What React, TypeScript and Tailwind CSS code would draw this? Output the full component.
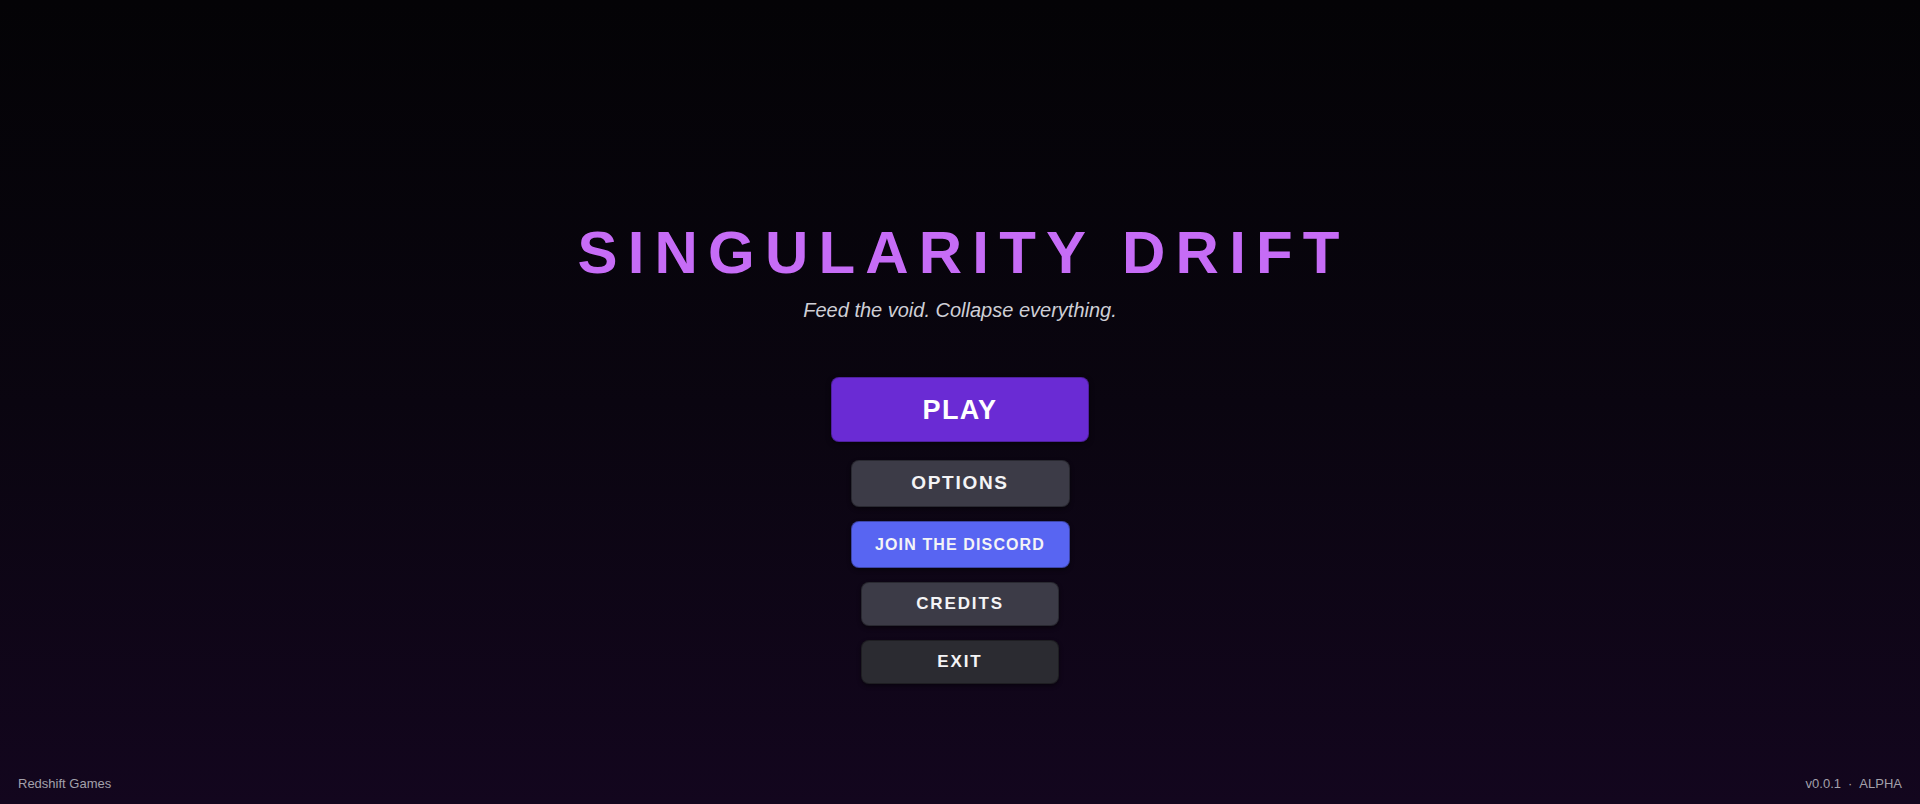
const menuItems = [
  { label: "OPTIONS", className: "w-[219px] h-[47px] bg-[#3c3b47] text-[19px] tracking-[0.09em]" },
  { label: "JOIN THE DISCORD", className: "w-[219px] h-[47px] bg-[#5865f2] text-[16px] tracking-[0.07em]" },
  { label: "CREDITS", className: "w-[198px] h-[44px] bg-[#3c3b47] text-[17px] tracking-[0.11em]" },
  { label: "EXIT", className: "w-[198px] h-[44px] bg-[#2b2b31] text-[17px] tracking-[0.11em]" },
];

function MenuButton({ label, className }: { label: string; className: string }) {
  return (
    <button
      className={`flex items-center justify-center rounded-lg font-bold text-[#f4f4f6] border border-black/30 shadow-[0_2px_4px_rgba(0,0,0,0.45)] ${className}`}
    >
      {label}
    </button>
  );
}

export default function App() {
  return (
    <div
      className="flex flex-col h-screen w-full bg-linear-to-b from-[#040306] via-[#0a0510] to-[#13061e] overflow-hidden"
      style={{ fontFamily: '"Liberation Sans", Arial, sans-serif' }}
    >
      <main className="flex-1 flex flex-col items-center pt-[223px]">
        <h1 className="text-[60px] leading-none font-bold tracking-[0.17em] text-[#c66cf6] pl-[0.12em]">
          SINGULARITY DRIFT
        </h1>
        <p className="mt-[13px] text-[20px] leading-[28px] italic text-[#cfcfd6]">
          Feed the void. Collapse everything.
        </p>
        <div className="mt-[53px] flex flex-col items-center">
          <button className="flex items-center justify-center w-[258px] h-[65px] rounded-lg bg-[#6a2bd4] border border-black/25 shadow-[0_2px_5px_rgba(0,0,0,0.5)] text-[27px] font-bold tracking-[0.05em] text-white pt-[2px]">
            PLAY
          </button>
          <div className="mt-[18px] flex flex-col items-center gap-[14px]">
            {menuItems.map((item) => (
              <MenuButton key={item.label} label={item.label} className={item.className} />
            ))}
          </div>
        </div>
      </main>
      <footer className="flex justify-between items-end px-[18px] pb-[11px] text-[13px] leading-[18px] text-[#a3a1ab]">
        <span>Redshift Games</span>
        <span>
          v0.0.1<span className="mx-[7px]">·</span>ALPHA
        </span>
      </footer>
    </div>
  );
}
